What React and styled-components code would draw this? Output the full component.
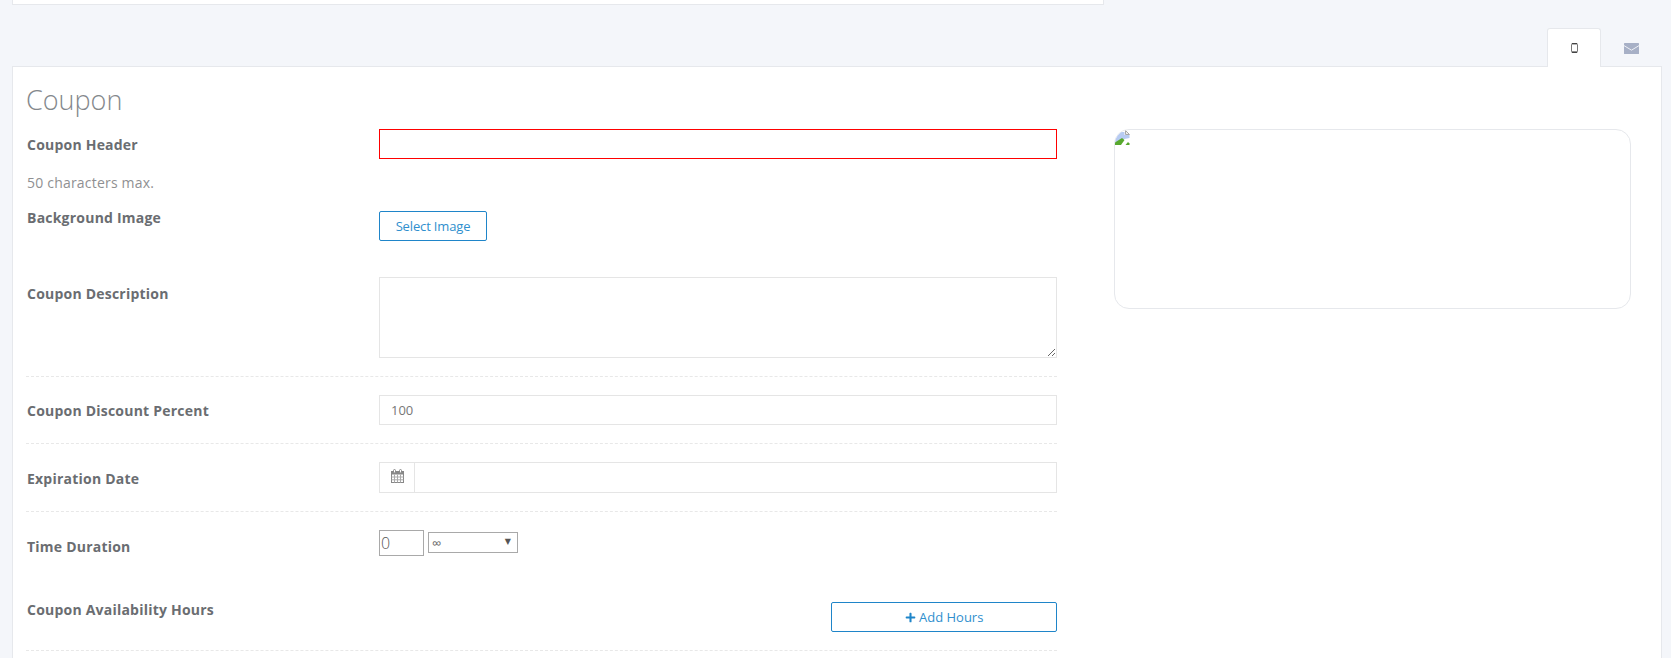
import React from "react";
import styled, { createGlobalStyle } from "styled-components";
import { FaPlus } from "react-icons/fa";

const GlobalStyle = createGlobalStyle`
  html, body {
    margin: 0;
    padding: 0;
    background: #f4f6fa;
    font-family: "Open Sans", sans-serif;
    font-size: 14px;
    color: #5f6368;
  }
`;

const MobileIcon = () => (
  <svg width="7" height="10" viewBox="0 0 7 10">
    <rect x="0.5" y="0.5" width="6" height="9" rx="1" fill="#fff" stroke="#777" />
    <rect x="1" y="0" width="5" height="1.4" fill="#444" />
    <rect x="1" y="8.4" width="5" height="1.6" fill="#444" />
  </svg>
);

const MailIcon = () => (
  <svg width="15" height="11" viewBox="0 0 15 11">
    <rect width="15" height="11" rx="0.5" fill="#a7b0c6" />
    <path d="M0 2.6l7.5 4.6 7.5-4.6" fill="none" stroke="#eef0f6" strokeWidth="1" />
  </svg>
);

const CalendarIcon = () => (
  <svg width="13" height="14" viewBox="0 0 13 14">
    <rect x="0.5" y="2.5" width="12" height="11" fill="#fff" stroke="#888" />
    <rect x="0.5" y="2.5" width="12" height="3" fill="#888" />
    <path d="M3.5 5.5v8M6.5 5.5v8M9.5 5.5v8M.5 8h12M.5 10.8h12" stroke="#aaa" strokeWidth="1" fill="none" />
    <rect x="2.5" y="0.5" width="2" height="3.5" rx="1" fill="#fff" stroke="#888" />
    <rect x="8.5" y="0.5" width="2" height="3.5" rx="1" fill="#fff" stroke="#888" />
  </svg>
);

const BrokenImageIcon = () => (
  <svg width="15" height="15" viewBox="0 0 15 15">
    <path d="M0 0h10l4.5 4.5V15H0z" fill="#fff" />
    <path d="M0 2h9.5v3h5v3L7 9.5 0 13z" fill="#b7cbf2" />
    <path d="M10.5 0.5v4h4M10.5 0.5l4 4" fill="#eee" stroke="#a8a8a8" />
    <path d="M0 15v-2.5L7 8l2.5 2-3.5 5z" fill="#58a82e" />
    <path d="M10.5 15l2.5-3 1.5 1.5V15z" fill="#58a82e" />
  </svg>
);

const App = () => {
  return (
    <Page>
      <GlobalStyle />
      <TopCard />
      <Tabs>
        <Tab $active>
          <MobileIcon />
        </Tab>
        <Tab>
          <MailIcon />
        </Tab>
      </Tabs>
      <Card>
        <Title>Coupon</Title>
        <Columns>
          <Form>
            <Row>
              <Label $top={6}>Coupon Header</Label>
              <TextInput $invalid />
            </Row>
            <Hint>50 characters max.</Hint>
            <Row $top={15} $bottom={36}>
              <Label>Background Image</Label>
              <div>
                <SelectButton>Select Image</SelectButton>
              </div>
            </Row>
            <Row $bottom={18} $divider>
              <Label $top={7}>Coupon Description</Label>
              <TextArea />
            </Row>
            <Row $top={18} $bottom={18} $divider>
              <Label $top={6}>Coupon Discount Percent</Label>
              <TextInput defaultValue="100" />
            </Row>
            <Row $top={18} $bottom={18} $divider>
              <Label $top={7}>Expiration Date</Label>
              <InputGroup>
                <Addon>
                  <CalendarIcon />
                </Addon>
                <GroupInput />
              </InputGroup>
            </Row>
            <Row $top={18} $bottom={43}>
              <Label $top={7}>Time Duration</Label>
              <DurationFields>
                <DurationInput defaultValue="0" />
                <SelectWrap>
                  <DurationSelect defaultValue="inf">
                    <option value="inf">∞</option>
                  </DurationSelect>
                  <Arrow>▼</Arrow>
                </SelectWrap>
              </DurationFields>
            </Row>
            <Row $bottom={18} $divider>
              <Label>Coupon Availability Hours</Label>
              <HoursCell>
                <AddHours>
                  <FaPlus size={11} /> Add Hours
                </AddHours>
              </HoursCell>
            </Row>
          </Form>
          <Preview>
            <BrokenImageIcon />
          </Preview>
        </Columns>
      </Card>
    </Page>
  );
};

const Page = styled.div`
  height: 658px;
  overflow: hidden;
  padding: 0 9px 0 12px;
`;

const TopCard = styled.div`
  width: 1090px;
  height: 4px;
  background: #fff;
  border: 1px solid #e6e8ec;
  border-top: 0;
`;

const Tabs = styled.div`
  display: flex;
  justify-content: flex-end;
  margin-top: 23px;
  padding-right: 4px;
  position: relative;
  z-index: 1;
  margin-bottom: -1px;
`;

const Tab = styled.div`
  width: ${(p) => (p.$active ? "54px" : "53px")};
  height: 39px;
  box-sizing: border-box;
  display: flex;
  align-items: center;
  justify-content: center;
  margin-left: ${(p) => (p.$active ? "0" : "4px")};
  background: ${(p) => (p.$active ? "#fff" : "transparent")};
  border: 1px solid ${(p) => (p.$active ? "#e6e8ec" : "transparent")};
  border-bottom: 0;
  border-radius: 3px 3px 0 0;
`;

const Card = styled.div`
  background: #fff;
  border: 1px solid #e6e8ec;
  padding: 0 14px 0 13px;
  height: 640px;
`;

const Title = styled.h3`
  margin: 0;
  padding: 16px 0 0 0;
  height: 46px;
  font-size: 27px;
  line-height: 34px;
  font-weight: 300;
  color: #84888c;
`;

const Columns = styled.div`
  display: flex;
  align-items: flex-start;
`;

const Form = styled.div`
  width: 1031px;
  flex: none;
`;

const Row = styled.div`
  display: grid;
  grid-template-columns: 353px 678px;
  align-items: start;
  padding-top: ${(p) => p.$top || 0}px;
  padding-bottom: ${(p) => p.$bottom || 0}px;
  border-bottom: ${(p) => (p.$divider ? "1px dashed #e8e8e8" : "0")};
`;

const Label = styled.div`
  font-size: 14px;
  line-height: 20px;
  font-weight: 700;
  letter-spacing: 0.22px;
  color: #6a6d71;
  padding-top: ${(p) => p.$top || 0}px;
  padding-left: 1px;
`;

const Hint = styled.div`
  margin-top: 14px;
  padding-left: 1px;
  line-height: 20px;
  letter-spacing: 0.2px;
  color: #8f9092;
`;

const TextInput = styled.input`
  width: 100%;
  height: 30px;
  box-sizing: border-box;
  padding: 0 16px 0 11px;
  font-family: "Open Sans", sans-serif;
  font-size: 13px;
  color: #777;
  background: #fff;
  border: 1px solid ${(p) => (p.$invalid ? "#ff0000" : "#e5e5e5")};
  outline: none;
`;

const SelectButton = styled.button`
  margin-top: 3px;
  width: 108px;
  height: 30px;
  padding: 0;
  font-family: "Open Sans", sans-serif;
  font-size: 13px;
  letter-spacing: -0.15px;
  color: #2f8fce;
  background: #fff;
  border: 1px solid #1f85c9;
  border-radius: 2px;
`;

const TextArea = styled.textarea`
  display: block;
  width: 100%;
  height: 81px;
  box-sizing: border-box;
  background: #fff;
  border: 1px solid #e5e5e5;
  outline: none;
  resize: vertical;
`;

const InputGroup = styled.div`
  display: flex;
  height: 31px;
  box-sizing: border-box;
  border: 1px solid #e5e5e5;
`;

const Addon = styled.div`
  width: 35px;
  flex: none;
  display: flex;
  justify-content: center;
  padding-top: 6px;
  box-sizing: border-box;
  border-right: 1px solid #e5e5e5;
`;

const GroupInput = styled.input`
  flex: 1;
  min-width: 0;
  border: 0;
  outline: none;
  background: #fff;
`;

const DurationFields = styled.div`
  display: flex;
  align-items: flex-start;
  gap: 4px;
`;

const DurationInput = styled.input`
  width: 45px;
  height: 26px;
  box-sizing: border-box;
  padding: 0 1px;
  font-family: "Open Sans", sans-serif;
  font-size: 16px;
  font-weight: 300;
  color: #555;
  background: #fff;
  border: 1px solid #a9a9a9;
  outline: none;
`;

const SelectWrap = styled.div`
  position: relative;
  margin-top: 2px;
`;

const DurationSelect = styled.select`
  display: block;
  appearance: none;
  width: 90px;
  height: 21px;
  box-sizing: border-box;
  padding: 0 3px;
  font-family: "Open Sans", sans-serif;
  font-size: 13px;
  color: #666;
  background: #fff;
  border: 1px solid #a9a9a9;
  border-radius: 0;
  outline: none;
`;

const Arrow = styled.span`
  position: absolute;
  right: 7px;
  top: 4px;
  font-family: "DejaVu Sans", sans-serif;
  font-size: 8px;
  line-height: 12px;
  color: #555;
  pointer-events: none;
`;

const HoursCell = styled.div`
  display: flex;
  justify-content: flex-end;
  padding-top: 2px;
`;

const AddHours = styled.button`
  width: 226px;
  height: 30px;
  padding: 0;
  font-family: "Open Sans", sans-serif;
  font-size: 13px;
  color: #2f8fce;
  background: #fff;
  border: 1px solid #1f85c9;
  border-radius: 2px;
  svg {
    vertical-align: -1px;
    color: #1f85c9;
  }
`;

const Preview = styled.div`
  width: 517px;
  height: 180px;
  box-sizing: border-box;
  margin-left: 57px;
  overflow: hidden;
  border: 1px solid #e6e8ec;
  border-radius: 15px;
  flex: none;
`;

export default App;
